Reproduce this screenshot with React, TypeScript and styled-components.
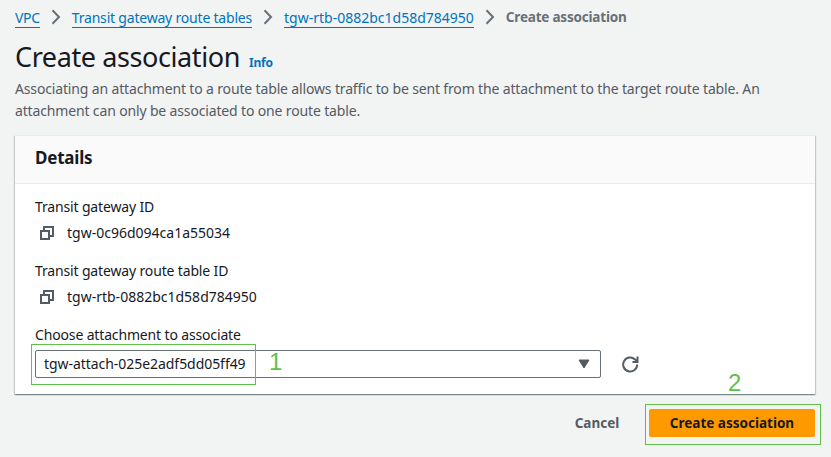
import React from "react";
import styled, { createGlobalStyle } from "styled-components";

const GlobalStyle = createGlobalStyle`
  * { box-sizing: border-box; }
  body {
    margin: 0;
    background: #f2f3f3;
    color: #16191f;
    font: 14px/22px "Noto Sans", "Open Sans", sans-serif;
  }
`;

const Page = styled.main`
  position: relative;
  width: 831px;
  height: 457px;
  padding: 6px 16px 0 15px;
  overflow: hidden;
  white-space: nowrap;
`;

const Breadcrumbs = styled.nav`
  display: flex;
  align-items: center;
  height: 22px;
`;

const Crumb = styled.a<{ $spacing: number }>`
  height: 21px;
  border-bottom: 1px solid #0073bb;
  color: #0073bb;
  line-height: 22px;
  letter-spacing: ${(p) => p.$spacing}px;
`;

const CurrentCrumb = styled.span`
  color: #687078;
  font-weight: 700;
  font-size: 13.5px;
  letter-spacing: -0.2px;
`;

const ChevronIcon = styled.svg`
  flex: none;
  width: 10px;
  height: 16px;
  margin: 0 11px;
`;

const TitleRow = styled.div`
  display: flex;
  align-items: baseline;
  height: 36px;
  margin-top: 11px;
`;

const Title = styled.h1`
  margin: 0;
  font-size: 27px;
  font-weight: 400;
  line-height: 36px;
  letter-spacing: -0.4px;
`;

const InfoLink = styled.a`
  margin-left: 9px;
  color: #0073bb;
  font-size: 12px;
  font-weight: 700;
  letter-spacing: -0.2px;
`;

const Description = styled.p<{ $spacing: number }>`
  margin: 3px 0 0;
  color: #545b64;
  letter-spacing: ${(p) => p.$spacing}px;
`;

const Card = styled.section`
  height: 259px;
  margin-top: 13px;
  background: #fff;
  border-top: 1px solid #eaeded;
  box-shadow: 0 1px 1px 0 rgba(0, 28, 36, 0.3), 1px 1px 1px 0 rgba(0, 28, 36, 0.15),
    -1px 1px 1px 0 rgba(0, 28, 36, 0.15);
`;

const CardHeader = styled.header`
  height: 48px;
  padding: 11px 20px 0;
  background: #fafafa;
  border-bottom: 1px solid #eaeded;
`;

const CardTitle = styled.h2`
  margin: 0;
  font-size: 17px;
  font-weight: 700;
  line-height: 22px;
  letter-spacing: -0.2px;
`;

const Fields = styled.div`
  display: flex;
  flex-direction: column;
  gap: 16px;
  padding: 12px 20px 0;
`;

const Field = styled.div`
  height: 48px;
`;

const Label = styled.div<{ $spacing: number }>`
  height: 22px;
  letter-spacing: ${(p) => p.$spacing}px;
`;

const CopyRow = styled.div<{ $spacing: number }>`
  display: flex;
  align-items: center;
  gap: 12px;
  height: 22px;
  margin-top: 4px;
  padding-left: 4px;
  letter-spacing: ${(p) => p.$spacing}px;
`;

const Icon16 = styled.svg`
  flex: none;
  width: 16px;
  height: 16px;
`;

const SelectRow = styled.div`
  display: flex;
  align-items: center;
  gap: 21px;
  margin-top: 4px;
`;

const Select = styled.div`
  display: flex;
  align-items: center;
  justify-content: space-between;
  width: 566px;
  height: 28px;
  padding: 0 9px 0 8px;
  border: 1px solid #687078;
  border-radius: 2px;
  letter-spacing: -0.05px;
`;

const RefreshIcon = styled.svg`
  width: 17px;
  height: 17px;
`;

const Actions = styled.footer`
  display: flex;
  justify-content: flex-end;
  align-items: center;
  gap: 9px;
  margin-top: 15px;
`;

const Button = styled.button<{ $primary?: boolean }>`
  height: 28px;
  width: ${(p) => (p.$primary ? 166 : 86)}px;
  padding: 0;
  border: 0;
  border-radius: 2px;
  background: ${(p) => (p.$primary ? "#ff9900" : "transparent")};
  color: ${(p) => (p.$primary ? "#16191f" : "#545b64")};
  font: 700 13.5px/22px "Noto Sans", sans-serif;
  letter-spacing: 0px;
`;

const Highlight = styled.div<{ $x: number; $y: number; $w: number; $h: number }>`
  position: absolute;
  left: ${(p) => p.$x}px;
  top: ${(p) => p.$y}px;
  width: ${(p) => p.$w}px;
  height: ${(p) => p.$h}px;
  border: 1px solid #5fc148;
`;

const StepNumber = styled.span<{ $x: number; $y: number }>`
  position: absolute;
  left: ${(p) => p.$x}px;
  top: ${(p) => p.$y}px;
  color: #5fc148;
  font: 24px/24px "Liberation Sans", Arial, sans-serif;
`;

const Chevron = () => (
  <ChevronIcon viewBox="0 0 10 16" fill="none" stroke="#687078" strokeWidth="2">
    <path d="M1.5 1.2 8 8l-6.5 6.8" />
  </ChevronIcon>
);

const CopyIcon = () => (
  <Icon16 viewBox="0 0 16 16" fill="none" stroke="#545b64" strokeWidth="2">
    <path d="M2 6h8v8H2z" />
    <path d="M5 6V2h9v9h-4" />
  </Icon16>
);

export default function App() {
  return (
    <>
      <GlobalStyle />
      <Page>
        <Breadcrumbs>
          <Crumb $spacing={-0.3}>VPC</Crumb>
          <Chevron />
          <Crumb $spacing={-0.2}>Transit gateway route tables</Crumb>
          <Chevron />
          <Crumb $spacing={0}>tgw-rtb-0882bc1d58d784950</Crumb>
          <Chevron />
          <CurrentCrumb>Create association</CurrentCrumb>
        </Breadcrumbs>
        <TitleRow>
          <Title>Create association</Title>
          <InfoLink>Info</InfoLink>
        </TitleRow>
        <Description $spacing={-0.15}>
          Associating an attachment to a route table allows traffic to be sent from the attachment to the target route table. An
          <br />
          attachment can only be associated to one route table.
        </Description>
        <Card>
          <CardHeader>
            <CardTitle>Details</CardTitle>
          </CardHeader>
          <Fields>
            <Field>
              <Label $spacing={-0.15}>Transit gateway ID</Label>
              <CopyRow $spacing={0}>
                <CopyIcon />
                tgw-0c96d094ca1a55034
              </CopyRow>
            </Field>
            <Field>
              <Label $spacing={-0.15}>Transit gateway route table ID</Label>
              <CopyRow $spacing={0}>
                <CopyIcon />
                tgw-rtb-0882bc1d58d784950
              </CopyRow>
            </Field>
            <Field>
              <Label $spacing={-0.15}>Choose attachment to associate</Label>
              <SelectRow>
                <Select>
                  tgw-attach-025e2adf5dd05ff49
                  <svg width="14" height="10" viewBox="0 0 14 10">
                    <path d="M2 1h10L7 9z" fill="#545b64" stroke="#545b64" strokeLinejoin="round" />
                  </svg>
                </Select>
                <RefreshIcon viewBox="0 0 17 17" fill="none" stroke="#545b64" strokeWidth="2">
                  <path d="M15.2 8.5a7 7 0 1 1-2.2-5.1l2.2 2.2M15.5 0.5v5.4h-5" />
                </RefreshIcon>
              </SelectRow>
            </Field>
          </Fields>
        </Card>
        <Actions>
          <Button>Cancel</Button>
          <Button $primary>Create association</Button>
        </Actions>
        <Highlight $x={31} $y={344} $w={225} $h={41} />
        <StepNumber $x={269} $y={350}>1</StepNumber>
        <Highlight $x={645} $y={404} $w={176} $h={41} />
        <StepNumber $x={728} $y={371}>2</StepNumber>
      </Page>
    </>
  );
}
